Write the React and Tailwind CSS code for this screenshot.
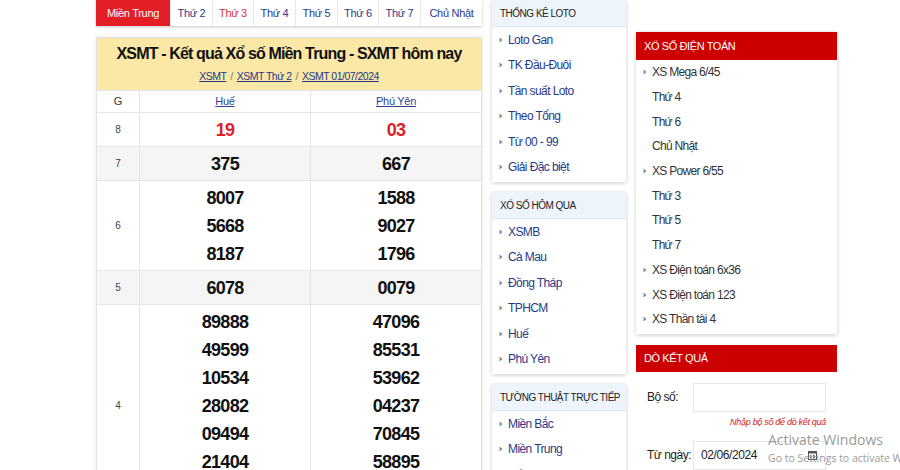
import React from "react";

function Bullet() {
  return (
    <svg width="4" height="6" viewBox="0 0 4 6" className="shrink-0">
      <path d="M0.5 0.5L3.5 3L0.5 5.5Z" fill="#8a8a8a" />
    </svg>
  );
}

const tabs = [
  { t: "Thứ 2", w: "w-[42px]", c: "text-[#2b3a8c]" },
  { t: "Thứ 3", w: "w-[41px]", c: "text-[#d6333b]" },
  { t: "Thứ 4", w: "w-[42px]", c: "text-[#2b3a8c]" },
  { t: "Thứ 5", w: "w-[42px]", c: "text-[#2b3a8c]" },
  { t: "Thứ 6", w: "w-[41px]", c: "text-[#2b3a8c]" },
  { t: "Thứ 7", w: "w-[42px]", c: "text-[#2b3a8c]" },
  { t: "Chủ Nhật", w: "flex-1", c: "text-[#2b3a8c]" },
];

const rows = [
  { g: "8", a: ["19"], b: ["03"], red: true },
  { g: "7", a: ["375"], b: ["667"], gray: true },
  { g: "6", a: ["8007", "5668", "8187"], b: ["1588", "9027", "1796"] },
  { g: "5", a: ["6078"], b: ["0079"], gray: true },
  {
    g: "4",
    a: ["89888", "49599", "10534", "28082", "09494", "21404", "33225"],
    b: ["47096", "85531", "53962", "04237", "70845", "58895", "19271"],
  },
];

function SideBox({ title, items, className = "" }) {
  return (
    <div className={"bg-white shadow-[0_1px_4px_rgba(0,0,0,0.22)] pb-[2px] " + className}>
      <div className="h-[27px] bg-[#edf4fc] border-b border-[#e2eaf3] flex items-center px-[8px] text-[10px] text-[#222] tracking-[-0.5px] whitespace-nowrap">
        {title}
      </div>
      {items.map((it) => (
        <div key={it} className="h-[25.5px] flex items-center gap-[5px] pl-[7px] text-[12px] text-[#26398c] tracking-[-0.6px]">
          <Bullet />
          <span>{it}</span>
        </div>
      ))}
    </div>
  );
}

const dtItems = [
  { t: "XS Mega 6/45", b: true },
  { t: "Thứ 4" },
  { t: "Thứ 6" },
  { t: "Chủ Nhật" },
  { t: "XS Power 6/55", b: true },
  { t: "Thứ 3" },
  { t: "Thứ 5" },
  { t: "Thứ 7" },
  { t: "XS Điện toán 6x36", b: true },
  { t: "XS Điện toán 123", b: true },
  { t: "XS Thần tài 4", b: true },
];

export default function App() {
  return (
    <div className="relative w-[900px] h-[470px] overflow-hidden bg-white flex gap-[10px] pl-[96px] font-['Liberation_Sans',Arial,sans-serif] text-[#333]">
      {/* Left column */}
      <div className="w-[386px] shrink-0">
        <div className="flex h-[26px] bg-white shadow-[0_1px_3px_rgba(0,0,0,0.22)] text-[11px] tracking-[-0.3px]">
          <div className="w-[74px] bg-[#e41e26] text-white flex items-center justify-center">Miền Trung</div>
          {tabs.map((t) => (
            <div key={t.t} className={t.w + " " + t.c + " border-l border-[#e8e8e8] flex items-center justify-center"}>
              {t.t}
            </div>
          ))}
        </div>

        <div className="mt-[11px] border border-[#e2e2e2] shadow-[0_1px_3px_rgba(0,0,0,0.12)] bg-white">
          <div className="bg-[#fbe8a6] text-center pt-[5px] pb-[6px]">
            <div className="text-[16px] font-bold leading-[22px] tracking-[-0.85px] text-[#111]">
              XSMT - Kết quả Xổ số Miền Trung - SXMT hôm nay
            </div>
            <div className="mt-[3px] text-[10.5px] leading-[16px] tracking-[-0.5px] text-[#22378b]">
              <span className="underline">XSMT</span>
              <span className="text-[#777] mx-[4px]">/</span>
              <span className="underline">XSMT Thứ 2</span>
              <span className="text-[#777] mx-[4px]">/</span>
              <span className="underline">XSMT 01/07/2024</span>
            </div>
          </div>

          <div className="grid grid-cols-[42px_1fr_1fr] h-[22px] text-[11px] border-t border-[#e6e6e6]">
            <div className="flex items-center justify-center text-[#333]">G</div>
            <div className="flex items-center justify-center border-l border-[#e6e6e6] text-[#2c3f95] underline tracking-[-0.3px]">Huế</div>
            <div className="flex items-center justify-center border-l border-[#e6e6e6] text-[#2c3f95] underline tracking-[-0.3px]">Phú Yên</div>
          </div>

          {rows.map((r) => (
            <div
              key={r.g}
              className={"grid grid-cols-[42px_1fr_1fr] border-t border-[#e6e6e6] " + (r.gray ? "bg-[#f5f5f5]" : "bg-white")}
            >
              <div className="flex items-center justify-center text-[10px] text-[#444]">{r.g}</div>
              {[r.a, r.b].map((col, i) => (
                <div key={i} className="border-l border-[#e6e6e6] pt-[3px] pb-[2px] flex flex-col items-center">
                  {col.map((n) => (
                    <div
                      key={n}
                      className={"leading-[28px] text-[18px] font-bold tracking-[-0.7px] " + (r.red ? "text-[#df2029]" : "text-[#111]")}
                    >
                      {n}
                    </div>
                  ))}
                </div>
              ))}
            </div>
          ))}
        </div>
      </div>

      {/* Middle column */}
      <div className="w-[134px] shrink-0 flex flex-col gap-[10px]">
        <SideBox title="THỐNG KÊ LOTO" items={["Loto Gan", "TK Đầu-Đuôi", "Tần suất Loto", "Theo Tổng", "Từ 00 - 99", "Giải Đặc biệt"]} />
        <SideBox title="XỔ SỐ HÔM QUA" items={["XSMB", "Cà Mau", "Đồng Tháp", "TPHCM", "Huế", "Phú Yên"]} />
        <SideBox title="TƯỜNG THUẬT TRỰC TIẾP" items={["Miền Bắc", "Miền Trung", "Miền Nam"]} />
      </div>

      {/* Right column */}
      <div className="w-[201px] shrink-0 pt-[32px]">
        <div className="bg-white shadow-[0_1px_4px_rgba(0,0,0,0.22)] pb-[2px]">
          <div className="h-[28px] bg-[#cc0000] text-white text-[11px] tracking-[-0.4px] flex items-center pl-[8px]">
            XỔ SỐ ĐIỆN TOÁN
          </div>
          {dtItems.map((it) => (
            <div key={it.t} className={"h-[24.7px] flex items-center gap-[5px] text-[12px] text-[#333] tracking-[-0.7px] " + (it.b ? "pl-[7px]" : "pl-[16px]")}>
              {it.b && <Bullet />}
              <span>{it.t}</span>
            </div>
          ))}
        </div>

        <div className="mt-[11px] bg-white">
          <div className="h-[27px] bg-[#cc0000] text-white text-[11px] tracking-[-0.4px] flex items-center pl-[8px]">
            DÒ KẾT QUẢ
          </div>
          <div className="mt-[11px] flex items-center">
            <div className="w-[57px] pl-[11px] text-[12px] text-[#222] tracking-[-0.5px]">Bộ số:</div>
            <div className="w-[133px] h-[29px] border border-[#e6e6e6] bg-white" />
          </div>
          <div className="mt-[4px] pr-[11px] text-right text-[9px] italic text-[#d4141c] tracking-[-0.3px] leading-[12px]">
            Nhập bộ số để dò kết quả
          </div>
          <div className="mt-[13px] flex items-center">
            <div className="w-[57px] pl-[11px] text-[12px] text-[#222] tracking-[-0.5px]">Từ ngày:</div>
            <div className="w-[133px] h-[29px] border border-[#e6e6e6] bg-white flex items-center justify-between pl-[7px] pr-[8px] text-[12px] text-[#222] tracking-[-0.4px]">
              <span>02/06/2024</span>
              <svg width="9" height="10" viewBox="0 0 9 10">
                <rect x="0.5" y="1.5" width="8" height="8" fill="none" stroke="#555" />
                <rect x="0.5" y="1.5" width="8" height="2" fill="#555" />
                <rect x="2" y="5" width="1.5" height="1.5" fill="#555" />
                <rect x="5" y="5" width="1.5" height="1.5" fill="#555" />
                <rect x="2" y="7" width="1.5" height="1.5" fill="#555" />
                <rect x="5" y="7" width="1.5" height="1.5" fill="#555" />
              </svg>
            </div>
          </div>
        </div>
      </div>

      {/* Windows watermark overlay */}
      <div className="absolute left-[768px] top-[431px] text-[#9a9a9a] font-['Open_Sans',sans-serif] whitespace-nowrap pointer-events-none">
        <div className="text-[14px] leading-[18px]">Activate Windows</div>
        <div className="text-[10.5px] leading-[16px] mt-[1px]">Go to Settings to activate Windows.</div>
      </div>
    </div>
  );
}
